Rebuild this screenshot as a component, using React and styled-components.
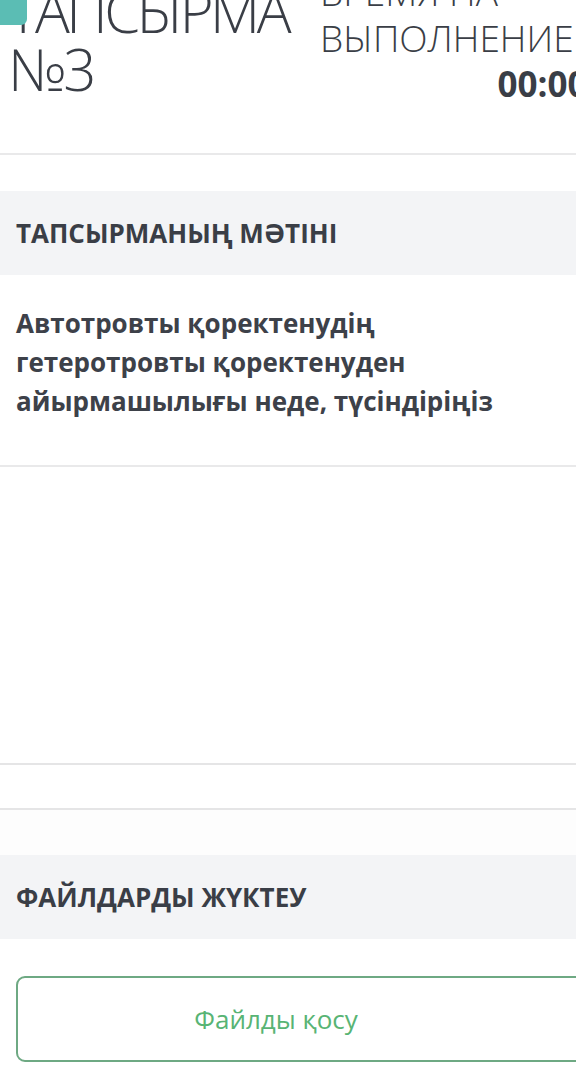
import React from "react";
import styled, { createGlobalStyle } from "styled-components";

const Global = createGlobalStyle`
  html, body {
    margin: 0;
    padding: 0;
    background: #ffffff;
    overflow: hidden;
  }
  body {
    font-family: "Open Sans", "Noto Sans", sans-serif;
    color: #3c4048;
  }
`;

const Page = styled.div`
  position: relative;
  display: flow-root;
  width: 620px;
  background: #ffffff;
`;

const Badge = styled.div`
  position: absolute;
  top: 0;
  left: 0;
  width: 27px;
  height: 25px;
  background: #5bbdb4;
  border-bottom-right-radius: 6px;
  z-index: 2;
`;

const Header = styled.header`
  box-sizing: border-box;
  display: flex;
  align-items: flex-start;
  gap: 32px;
  height: 173px;
  margin-top: -18px;
  padding: 0 8px;
  border-bottom: 2px solid #e9e9ea;
`;

const Title = styled.h1`
  margin: 0;
  font-size: 58px;
  line-height: 58px;
  font-weight: 300;
  letter-spacing: -3.5px;
  color: #3a3e46;
  white-space: nowrap;
`;

const TimeBox = styled.div`
  display: flex;
  flex-direction: column;
  align-items: flex-end;
  margin-top: -13px;
`;

const TimeLabel = styled.div`
  font-size: 37px;
  line-height: 46px;
  font-weight: 300;
  color: #3a3e46;
  white-space: nowrap;
`;

const Timer = styled.div`
  font-size: 35px;
  line-height: 46px;
  font-weight: 700;
  color: #3a3e46;
  margin-right: -14px;
`;

const SectionHead = styled.div`
  display: flex;
  align-items: center;
  height: 84px;
  margin-top: ${(p) => p.$gap}px;
  padding: 0 16px;
  background: #f3f4f6;
  font-size: 26px;
  font-weight: 700;
  color: #3a3e46;
`;

const Question = styled.div`
  padding: 29px 16px 44px;
  border-bottom: 2px solid #e9e9ea;
`;

const QuestionText = styled.p`
  margin: 0;
  width: 530px;
  font-size: 26px;
  line-height: 39px;
  font-weight: 700;
  color: #3d4149;
`;

const Area = styled.div`
  height: ${(p) => p.$h}px;
  border-bottom: 2px solid #e5e5e6;
`;

const Fade = styled.div`
  height: 45px;
  background: #fdfdfd;
`;

const UploadButton = styled.button`
  box-sizing: border-box;
  display: flex;
  align-items: center;
  justify-content: center;
  width: 588px;
  height: 86px;
  margin: 37px 0 0 16px;
  padding: 0 68px 0 0;
  background: #ffffff;
  border: 2px solid #6ea983;
  border-radius: 9px;
  font-family: "Open Sans", "Noto Sans", sans-serif;
  font-size: 26px;
  font-weight: 400;
  color: #58b474;
  cursor: pointer;
`;

export default function App() {
  return (
    <Page>
      <Global />
      <Badge />
      <Header>
        <Title>
          ТАПСЫРМА
          <br />
          №3
        </Title>
        <TimeBox>
          <TimeLabel>
            ВРЕМЯ НА
            <br />
            ВЫПОЛНЕНИЕ
          </TimeLabel>
          <Timer>00:00</Timer>
        </TimeBox>
      </Header>
      <SectionHead $gap={36}>ТАПСЫРМАНЫҢ МӘТІНІ</SectionHead>
      <Question>
        <QuestionText>
          Автотровты қоректенудің гетеротровты қоректенуден айырмашылығы неде,
          түсіндіріңіз
        </QuestionText>
      </Question>
      <Area $h={296} />
      <Area $h={43} />
      <Fade />
      <SectionHead $gap={0}>ФАЙЛДАРДЫ ЖҮКТЕУ</SectionHead>
      <UploadButton type="button">Файлды қосу</UploadButton>
    </Page>
  );
}
